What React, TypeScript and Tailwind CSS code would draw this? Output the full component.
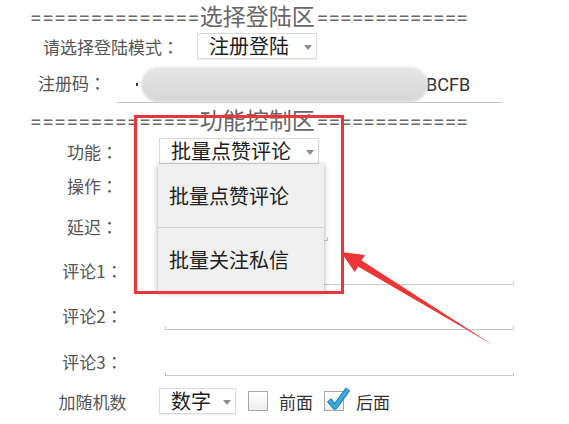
import React from "react";

function Tri() {
  return (
    <svg width="8" height="5" viewBox="0 0 8 5" className="shrink-0 mt-[3px]">
      <path d="M0 0 L8 0 L4 5 Z" fill="#8c8c8c" />
    </svg>
  );
}

function Spinner({ text, w }: { text: string; w: string }) {
  return (
    <div
      className={`flex items-center h-[26px] ${w} border border-[#d9d9d9] bg-white pl-[11px] pr-[4px] shadow-[0_1px_1px_rgba(0,0,0,0.06)]`}
    >
      <span className="flex-1 text-[20px] leading-none text-[#1e1e1e] whitespace-nowrap">
        {text}
      </span>
      <Tri />
    </div>
  );
}

function Edit({ w, children }: { w: string; children?: React.ReactNode }) {
  return (
    <div className={`flex flex-col h-[30px] ${w} shrink-0`}>
      <div className="flex-1 flex items-center">{children}</div>
      <div className="h-[4px] border-x border-b border-[#c9c9c9]" />
    </div>
  );
}

function Header({ title }: { title: string }) {
  return (
    <div className="flex items-baseline whitespace-nowrap leading-[30px]">
      <span className="font-['Roboto',sans-serif] text-[21px] tracking-[0.6px] text-[#6a6a6a]">
        ==============
      </span>
      <span className="text-[23px] text-[#666]">{title}</span>
      <span className="ml-[2px] font-['Roboto',sans-serif] text-[21px] tracking-[0.1px] text-[#6a6a6a]">
        =============
      </span>
    </div>
  );
}

function Colon() {
  return <span className="font-['Noto_Sans_CJK_TC',sans-serif]">：</span>;
}

function Label({ text, colon = true }: { text: string; colon?: boolean }) {
  return (
    <div className="w-[159px] pl-[26px] text-center text-[17px] leading-none text-[#555] whitespace-nowrap shrink-0">
      {text}
      {colon && <Colon />}
    </div>
  );
}

function Box({ checked }: { checked?: boolean }) {
  return (
    <div className="relative w-[20px] h-[20px] border border-[#a8a8a8] bg-gradient-to-b from-white to-[#eeeeee] shrink-0">
      {checked && (
        <svg
          width="26"
          height="26"
          viewBox="0 0 26 26"
          className="absolute left-[0px] top-[-7px]"
        >
          <path
            d="M4 15 L10 22 L23 4"
            fill="none"
            stroke="#1d7fae"
            strokeWidth="5.5"
            strokeLinejoin="round"
          />
          <path
            d="M4 15 L10 22 L23 4"
            fill="none"
            stroke="#38abdf"
            strokeWidth="3.2"
            strokeLinejoin="round"
          />
        </svg>
      )}
    </div>
  );
}

export default function App() {
  return (
    <div className="relative w-[569px] h-[424px] overflow-hidden bg-white font-['Noto_Sans_CJK_SC','Noto_Sans',sans-serif] text-[#555]">
      <div className="h-[32px] flex items-center pl-[30px]">
        <Header title="选择登陆区" />
      </div>

      <div className="h-[28px] flex items-center pl-[43px]">
        <div className="w-[154px] text-[17px] leading-none text-[#555] whitespace-nowrap">
          请选择登陆模式
          <Colon />
        </div>
        <Spinner text="注册登陆" w="w-[120px]" />
      </div>

      <div className="h-[44px] flex items-center pl-[38px]">
        <div className="w-[79px] text-[17px] leading-none text-[#555] whitespace-nowrap">
          注册码
          <Colon />
        </div>
        <Edit w="w-[385px]">
          <div className="ml-[19px] w-[2px] h-[3px] bg-[#333] shrink-0" />
          <div className="relative z-10 ml-[3px] w-[287px] h-[35px] shrink-0 rounded-[18px] bg-gradient-to-b from-[#e6e6e6] to-[#d7d7d7] blur-[1px]" />
          <span className="-ml-[2px] font-['Roboto',sans-serif] text-[18px] leading-none text-[#333]">
            BCFB
          </span>
        </Edit>
      </div>

      <div className="h-[32px] flex items-center pl-[30px]">
        <Header title="功能控制区" />
      </div>

      <div className="h-[30px] flex items-center">
        <Label text="功能" />
        <Spinner text="批量点赞评论" w="w-[160px]" />
      </div>

      <div className="h-[38px] flex items-center">
        <Label text="操作" />
        <Spinner text="" w="w-[160px]" />
      </div>

      <div className="h-[44px] flex items-center">
        <Label text="延迟" />
        <div className="ml-[6px]">
          <Edit w="w-[163px]" />
        </div>
      </div>

      <div className="h-[44px] flex items-center">
        <Label text="评论1" />
        <div className="ml-[6px]">
          <Edit w="w-[349px]" />
        </div>
      </div>

      <div className="h-[46px] flex items-center">
        <Label text="评论2" />
        <div className="ml-[6px]">
          <Edit w="w-[349px]" />
        </div>
      </div>

      <div className="h-[46px] flex items-center">
        <Label text="评论3" />
        <div className="ml-[6px]">
          <Edit w="w-[349px]" />
        </div>
      </div>

      <div className="h-[34px] flex items-center">
        <Label text="加随机数" colon={false} />
        <Spinner text="数字" w="w-[77px]" />
        <div className="ml-[12px]">
          <Box />
        </div>
        <span className="ml-[11px] text-[17px] leading-none text-[#333]">前面</span>
        <div className="ml-[11px]">
          <Box checked />
        </div>
        <span className="ml-[12px] text-[17px] leading-none text-[#333]">后面</span>
      </div>

      {/* open dropdown menu */}
      <div className="absolute left-[158px] top-[164px] w-[166px] h-[128px] overflow-hidden bg-[#f0f0f0] shadow-[0_1px_5px_rgba(0,0,0,0.35)] flex flex-col">
        <div className="h-[63px] shrink-0 flex items-center pl-[11px] text-[20px] leading-none text-[#1e1e1e]">
          批量点赞评论
        </div>
        <div className="h-[1px] shrink-0 bg-[#d2d2d2]" />
        <div className="h-[63px] shrink-0 flex items-center pl-[11px] text-[20px] leading-none text-[#1e1e1e]">
          批量关注私信
        </div>
        <div className="h-[1px] shrink-0 bg-[#d2d2d2]" />
      </div>

      {/* red highlight box */}
      <div className="absolute left-[134px] top-[115px] w-[210px] h-[179px] border-[3px] border-[#e8363b]" />

      {/* red arrow */}
      <svg
        className="absolute left-0 top-0 pointer-events-none"
        width="569"
        height="424"
        viewBox="0 0 569 424"
      >
        <polygon
          points="341,252 365,255 361.6,260.5 493,345 358,266.5 354.6,272"
          fill="#ee3535"
        />
      </svg>
    </div>
  );
}
